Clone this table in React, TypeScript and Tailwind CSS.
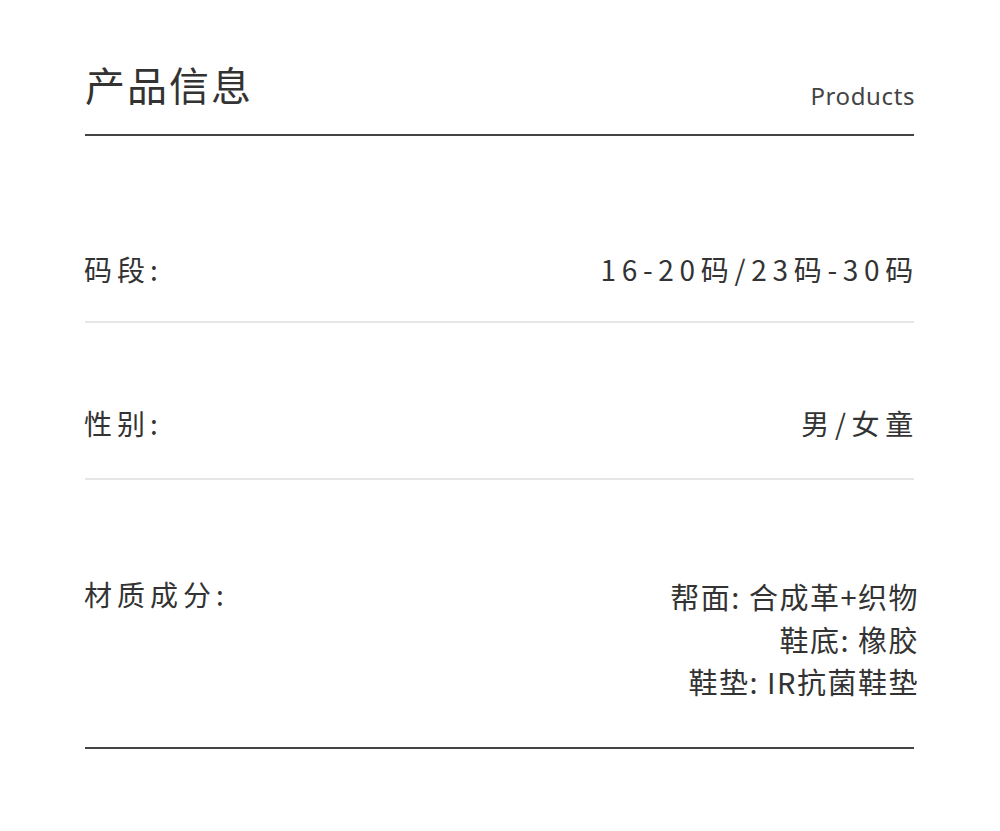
import React from 'react';

const rows = [
    { label: '码段:', value: ['16-20码/23码-30码'], pad: 'pt-[113px] pb-[32px]', spaced: true },
    { label: '性别:', value: ['男/女童'], pad: 'pt-[80px] pb-[35px]', spaced: true },
    { label: '材质成分:', value: ['帮面: 合成革+织物', '鞋底: 橡胶', '鞋垫: IR抗菌鞋垫'], pad: 'pt-[94px] pb-[44px]', spaced: false },
];

const App: React.FC = () => {
    return (
        <div className="w-[1000px] h-[831px] bg-white text-[#333] font-['Noto_Sans_CJK_SC','Noto_Sans',sans-serif]">
            <div className="ml-[85px] w-[829px]">
                <div className="flex items-end justify-between h-[136px] pb-[22px] border-b-2 border-[#444]">
                    <h1 className="text-[40px] leading-[48px] tracking-[2px] font-normal mb-[4px]">产品信息</h1>
                    <span className="text-[24px] leading-[30px] text-[#444] font-['Noto_Sans',sans-serif] tracking-[0.6px] mb-[1px] mr-[-1px]">Products</span>
                </div>
                {rows.map((row, i) => (
                    <div
                        key={row.label}
                        className={`flex justify-between items-start ${row.pad} ${i < rows.length - 1 ? 'border-b-2 border-[#e6e6e6]' : 'border-b-2 border-[#444]'}`}
                    >
                        <span className="text-[28px] leading-[40px] tracking-[5px] ml-[-1px]">{row.label}</span>
                        {row.spaced ? (
                            <span className="text-[28px] leading-[40px] tracking-[5.7px] mr-[-5px]">{row.value[0]}</span>
                        ) : (
                            <div className="flex flex-col items-end text-[29px] leading-[42.5px] tracking-[1.5px] mr-[-5px] mt-[1px]">
                                {row.value.map(v => <span key={v}>{v}</span>)}
                            </div>
                        )}
                    </div>
                ))}
            </div>
        </div>
    );
};

export default App;
